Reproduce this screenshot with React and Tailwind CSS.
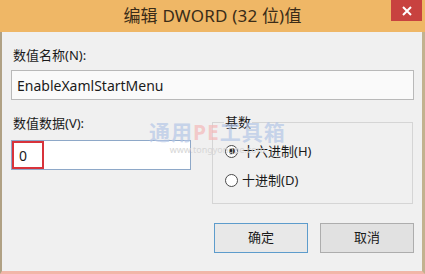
import React from "react";

const font = { fontFamily: '"Noto Sans", "Noto Sans CJK SC", sans-serif' };

const Radio = ({ checked, label }) => (
  <label className="flex items-center gap-[4px] text-[13px] text-[#1a1a1a] leading-[16px]">
    <span className="w-[13px] h-[13px] rounded-full border border-[#4a4a4a] bg-white flex items-center justify-center">
      {checked && <span className="w-[6px] h-[6px] rounded-full bg-[#222]"></span>}
    </span>
    <span>{label}</span>
  </label>
);

export default function App() {
  return (
    <div className="w-[425px] h-[274px] flex flex-col overflow-hidden" style={font}>
      {/* Title bar */}
      <div className="relative h-[32px] bg-[#efb766] flex items-center justify-center">
        <span className="text-[17px] text-[#3a2c18] tracking-[0.2px]">编辑 DWORD (32 位)值</span>
        <div className="absolute right-[3px] top-0 w-[31px] h-[21px] bg-[#c8423f] flex items-center justify-center">
          <svg width="10" height="10" viewBox="0 0 10 10">
            <path d="M1 1L9 9M9 1L1 9" stroke="white" strokeWidth="2" />
          </svg>
        </div>
      </div>

      {/* Body */}
      <div className="relative flex-1 bg-[#f0f0f0] border-l-2 border-r-[3px] border-b-[3px] border-l-[#b0a184] border-r-[#c2b28f] border-b-[#f2b5a8] pl-[9px] pr-[8px] pt-[14px] flex flex-col">
        <div className="ml-[2px] text-[13px] leading-[18px] text-[#1a1a1a]">数值名称(N):</div>
        <div className="mt-[6px] h-[30px] border border-[#b9b9b9] bg-[#fafafa] flex items-center pl-[5px] text-[14px] text-[#1a1a1a]">
          EnableXamlStartMenu
        </div>

        <div className="mt-[14px] flex">
          <div className="w-[180px] flex flex-col">
            <div className="ml-[2px] text-[13px] leading-[18px] text-[#1a1a1a]">数值数据(V):</div>
            <div className="mt-[8px] h-[30px] border border-[#8ea8c8] bg-white flex items-stretch">
              <div className="w-[32px] border-2 border-[#d8333b] flex items-center pl-[5px] text-[14px] text-[#1a1a1a]">0</div>
            </div>
          </div>

          <fieldset className="ml-[21px] w-[201px] h-[90px] border border-[#d5d5d5] px-[12px]">
            <legend className="ml-[-1px] px-[1px] text-[13px] leading-[16px] text-[#1a1a1a]">基数</legend>
            <div className="mt-[13px] flex flex-col gap-[13px]">
              <Radio checked label="十六进制(H)" />
              <Radio label="十进制(D)" />
            </div>
          </fieldset>
        </div>

        <div className="mt-[19px] flex justify-end gap-[12px]">
          <button className="w-[94px] h-[30px] border border-[#5d9ccc] bg-[#e8e8e8] text-[13px] text-[#1a1a1a]">确定</button>
          <button className="w-[94px] h-[30px] border border-[#adadad] bg-[#e1e1e1] text-[13px] text-[#1a1a1a]">取消</button>
        </div>

        {/* Watermark */}
        <div className="absolute left-[147px] top-[89px] pointer-events-none flex flex-col items-center">
          <div className="text-[21px] font-bold leading-[22px] tracking-[1px]">
            <span className="text-[#b4c6e6]/70">通用</span>
            <span className="text-[#f4b8b8]/70">PE</span>
            <span className="text-[#b4c6e6]/70">工具箱</span>
          </div>
          <div className="mt-[2px] text-[9px] leading-[10px] text-[#d6d6d6]">www.tongyongpe.com</div>
        </div>
      </div>
    </div>
  );
}
